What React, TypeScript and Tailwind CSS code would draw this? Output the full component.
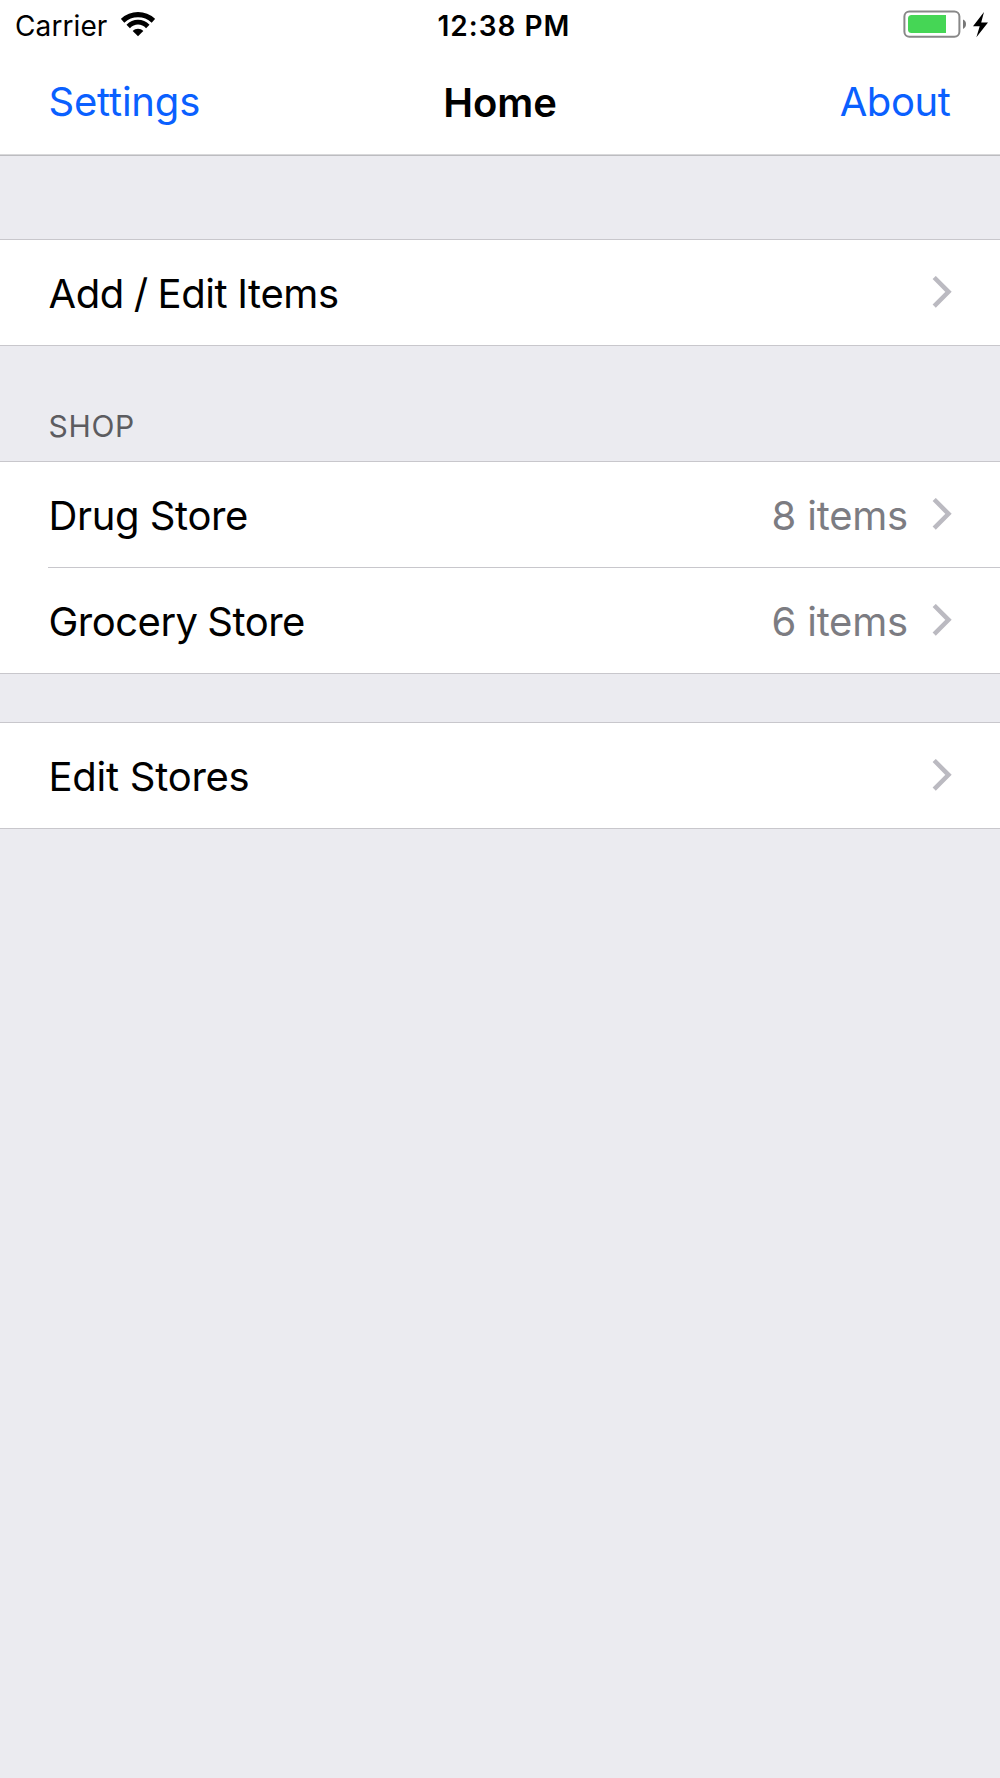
import React from "react";

type RowProps = {
  title: string;
  titleClass: string;
  detail?: string;
};

function Chevron() {
  return (
    <svg className="mb-[2px] w-5 h-8 shrink-0" viewBox="0 0 20 32" fill="none">
      <path d="M2.2 1.5L16.5 15.8L2.2 30.1" stroke="#bbbac1" strokeWidth="4.5" />
    </svg>
  );
}

function Row(props: RowProps) {
  return (
    <div className="flex h-[105px] items-center pl-[48.5px] pr-[48px] text-[40px] leading-[48px]">
      <span className={"flex-1 pt-[2px] " + props.titleClass}>
        {props.title}
      </span>
      {props.detail && (
        <span className="pt-[2px] pr-[24px] text-[#7c7c82] tracking-[-0.2px]">
          {props.detail}
        </span>
      )}
      <Chevron />
    </div>
  );
}

function StatusBar() {
  return (
    <div className="grid h-[50px] grid-cols-3 items-center text-[28px] leading-[34px]">
      <div className="flex items-center pl-[15px]">
        <span className="pt-px tracking-[0.1px]">Carrier</span>
        <svg className="mb-[2px] ml-[14px] h-[25px] w-[34px]" viewBox="0 0 34 25">
          <path
            d="M1.6 8.8C10.5 .6 23.5 .6 32.4 8.8"
            fill="none"
            stroke="#000"
            strokeWidth="5.1"
          />
          <path
            d="M7.2 14.5C12.8 8.7 21.2 8.7 26.8 14.5"
            fill="none"
            stroke="#000"
            strokeWidth="4.8"
          />
          <path d="M11.7 18.9C14.6 16 19.4 16 22.3 18.9L17 24.3Z" />
        </svg>
      </div>
      <span className="pt-px pl-[8px] text-center font-semibold tracking-[1px]">
        12:38 PM
      </span>
      <div className="flex items-center justify-end pr-[11px] pb-[2px]">
        <svg className="h-7 w-[86px]" viewBox="0 0 86 28">
          <rect
            x="1.4"
            y="1.5"
            width="55"
            height="25.2"
            rx="5"
            fill="none"
            stroke="#888888"
            strokeWidth="2"
          />
          <path
            d="M8.5 5H43V23H8.5Q5 23 5 19.5V8.5Q5 5 8.5 5Z"
            fill="#45d655"
          />
          <path d="M60 9.4Q63 10.5 63 14.1T60 19Z" fill="#777777" />
          <path d="M81 2L70 16.2H76.7L73.4 27.2L85 12.4H78.2Z" />
        </svg>
      </div>
    </div>
  );
}

function App() {
  return (
    <main className="min-h-[1778px] w-full bg-[#ebebf0] font-['Inter',sans-serif] text-black">
      <header className="h-[156px] border-b border-[#bcbcc0] bg-white">
        <StatusBar />
        <nav className="grid h-[105px] grid-cols-3 items-center border-b border-[#d8d8da] pl-[48.5px] pr-[49.5px] text-[40px] leading-[48px]">
          <a className="text-[#0a60ff] tracking-[-0.2px]">Settings</a>
          <h1 className="pt-[2px] pl-px text-center font-semibold tracking-[-0.1px]">
            Home
          </h1>
          <a className="text-right text-[#0a60ff] tracking-[-0.4px]">About</a>
        </nav>
      </header>

      <section className="mt-[83px] border-y border-[#c8c7cc] bg-white">
        <Row
          title="Add / Edit Items"
          titleClass="tracking-[-0.4px] [word-spacing:-1px]"
        />
      </section>

      <h2 className="flex h-[115px] items-end pb-[17px] pl-[48.5px] text-[30px] leading-[36px] tracking-[0.7px] text-[#5c5c60]">
        SHOP
      </h2>
      <section className="border-y border-[#c8c7cc] bg-white">
        <Row
          title="Drug Store"
          titleClass="tracking-[-0.4px]"
          detail="8 items"
        />
        <div className="ml-[48px] h-px bg-[#c8c7cc]" />
        <Row
          title="Grocery Store"
          titleClass="tracking-[-0.5px] [word-spacing:-1px]"
          detail="6 items"
        />
      </section>

      <section className="mt-[48px] border-y border-[#c8c7cc] bg-white">
        <Row title="Edit Stores" titleClass="tracking-[-0.25px]" />
      </section>
    </main>
  );
}

export default App;
